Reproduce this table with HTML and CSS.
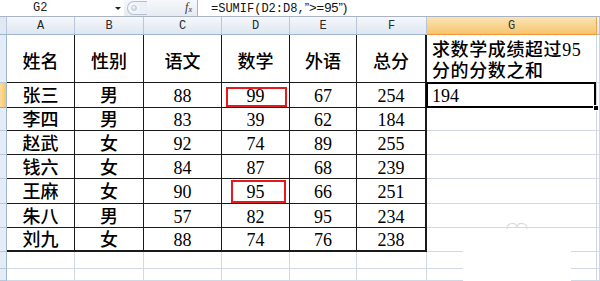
FILE: index.html
```html
<!DOCTYPE html>
<html>
<head>
<meta charset="utf-8">
<link rel="stylesheet" href="styles.css">
</head>
<body>
<div class="bar">
  <div class="namebox">G2</div>
  <div class="dd"><svg width="8" height="5" viewBox="0 0 8 5"><path d="M1 1h6l-3 3z" fill="#222"/></svg></div>
  <div class="tools">
    <span class="knob"><span class="dot"></span></span>
    <span class="fx"><i>f</i><sub>x</sub></span>
  </div>
  <div class="formula"><span class="mono">=SUMIF(D2:D8,</span><span class="sans">”&gt;=95”)</span></div>
</div>
<div class="sheet">
  <div class="h corner"></div>
  <div class="h">A</div><div class="h">B</div><div class="h">C</div><div class="h">D</div><div class="h">E</div><div class="h">F</div><div class="h hs">G</div><div class="h"></div>

  <div class="rh"></div>
  <div class="c d t">姓名</div><div class="c d t">性别</div><div class="c d t">语文</div><div class="c d t">数学</div><div class="c d t">外语</div><div class="c d dr t">总分</div>
  <div class="c g1">求数学成绩超过95<br>分的分数之和</div><div class="c"></div>

  <div class="rh rhs"></div>
  <div class="c d">张三</div><div class="c d">男</div><div class="c d">88</div><div class="c d mark"><span class="red r1"></span>99</div><div class="c d">67</div><div class="c d dr">254</div>
  <div class="c g2">194<span class="sel"></span><span class="handle"></span></div><div class="c"></div>

  <div class="rh"></div>
  <div class="c d">李四</div><div class="c d">男</div><div class="c d">83</div><div class="c d">39</div><div class="c d">62</div><div class="c d dr">184</div>
  <div class="c"></div><div class="c"></div>

  <div class="rh"></div>
  <div class="c d">赵武</div><div class="c d">女</div><div class="c d">92</div><div class="c d">74</div><div class="c d">89</div><div class="c d dr">255</div>
  <div class="c"></div><div class="c"></div>

  <div class="rh"></div>
  <div class="c d">钱六</div><div class="c d">女</div><div class="c d">84</div><div class="c d">87</div><div class="c d">68</div><div class="c d dr">239</div>
  <div class="c"></div><div class="c"></div>

  <div class="rh"></div>
  <div class="c d">王麻</div><div class="c d">女</div><div class="c d">90</div><div class="c d mark"><span class="red r2"></span>95</div><div class="c d">66</div><div class="c d dr">251</div>
  <div class="c"></div><div class="c"></div>

  <div class="rh"></div>
  <div class="c d">朱八</div><div class="c d">男</div><div class="c d">57</div><div class="c d">82</div><div class="c d">95</div><div class="c d dr">234</div>
  <div class="c"></div><div class="c"></div>

  <div class="rh"></div>
  <div class="c d db">刘九</div><div class="c d db">女</div><div class="c d db">88</div><div class="c d db">74</div><div class="c d db">76</div><div class="c d dr db">238</div>
  <div class="c"></div><div class="c"></div>

  <div class="rh"></div>
  <div class="c"></div><div class="c"></div><div class="c"></div><div class="c"></div><div class="c"></div><div class="c"></div><div class="c"></div><div class="c"></div>

  <div class="rh"></div>
  <div class="c"></div><div class="c"></div><div class="c"></div><div class="c"></div><div class="c"></div><div class="c"></div><div class="c"></div><div class="c"></div>

  <div class="patch"></div>
  <svg class="wm" width="22" height="10" viewBox="0 0 22 10"><path d="M1 9C1 2 10 2 11 7C12 2 21 2 21 9" fill="none" stroke="#dcdcdc" stroke-width="1.2"/></svg>
</div>
</body>
</html>
```

FILE: styles.css
```css
* { box-sizing: border-box; }
body {
  margin: 0;
  width: 600px;
  height: 281px;
  overflow: hidden;
  background: #fff;
}
.bar {
  display: flex;
  height: 17px;
  border-bottom: 1px solid #a9b3c1;
  background: #fff;
}
.namebox {
  width: 112px;
  padding-left: 33px;
  font: 12px/16px "Liberation Mono", monospace;
  color: #222;
}
.dd {
  width: 12px;
  display: flex;
  align-items: center;
  justify-content: center;
}
.tools {
  width: 74px;
  display: flex;
  align-items: center;
  justify-content: space-between;
  padding: 0 5px 0 3px;
  background: linear-gradient(#f6f8fb, #e6ebf2);
  border-right: 1px solid #aab4c3;
}
.knob {
  width: 20px;
  height: 14px;
  border: 1px solid #b4c0cf;
  border-right: none;
  border-radius: 8px 0 0 8px;
  background: linear-gradient(90deg, #f7f9fc, #e9eef5);
  display: flex;
  align-items: center;
  padding-left: 3px;
}
.dot {
  width: 6px;
  height: 6px;
  border-radius: 50%;
  background: radial-gradient(circle at 40% 35%, #fff, #b9c2cc);
  border: 1px solid #c3cbd5;
}
.fx {
  font: 12px/16px "Liberation Serif", serif;
  color: #333;
}
.fx sub { font-size: 8px; font-style: italic; vertical-align: -1px; }
.formula {
  flex: 1;
  padding-left: 13px;
  font-size: 12px;
  line-height: 16px;
  color: #111;
  white-space: nowrap;
}
.mono { font-family: "Liberation Mono", monospace; }
.sans { font-family: "Liberation Sans", sans-serif; font-size: 13px; }

.sheet {
  position: relative;
  display: grid;
  grid-template-columns: 7px 68px 69px 78px 68px 67px 70px 170px 3px;
  grid-template-rows: 18px 48px 25px 23px 24px 24px 25px 24px 24px 17px 12px;
}
.h {
  background: linear-gradient(#f5f8fc, #dfe6f0);
  border-right: 1px solid #b8c6d8;
  border-bottom: 1px solid #9eb6ce;
  font: 12px/1 "Liberation Mono", monospace;
  color: #2b2b2b;
  display: flex;
  justify-content: center;
  align-items: flex-end;
  padding-bottom: 2px;
}
.corner { background: #e0e8f3; }
.hs {
  background: linear-gradient(#fbe4b6, #f6c56c);
  border-bottom: 1px solid #f29436;
  border-right: 1px solid #f2a44a;
  color: #333;
}
.rh {
  background: #e4ecf7;
  border-right: 1px solid #9eb6ce;
  border-bottom: 1px solid #b8c9dd;
}
.rhs {
  background: linear-gradient(90deg, #fbdca0, #f7c463);
  border-bottom: 1px solid #f29436;
}
.c {
  border-right: 1px solid #d0d7e5;
  border-bottom: 1px solid #d0d7e5;
  display: flex;
  align-items: center;
  justify-content: center;
  padding-top: 2px;
  font: 500 18px/20px "Liberation Serif", "Noto Sans CJK SC", serif;
  color: #000;
}
.d {
  border-right-color: #1a1a1a;
  border-bottom-color: #1a1a1a;
}
.t { padding-top: 6px; }
.dr { border-right-width: 2px; }
.db { border-bottom-width: 2px; }
.g1 {
  justify-content: flex-start;
  align-items: flex-end;
  padding: 0 0 1px 5px;
  line-height: 21px;
  letter-spacing: 0.6px;
  border-bottom: none;
}
.g2 {
  position: relative;
  justify-content: flex-start;
  padding-left: 5px;
}
.sel {
  position: absolute;
  left: -1px;
  top: -1px;
  right: 0;
  bottom: -1px;
  border: 2px solid #000;
}
.handle {
  position: absolute;
  right: -3px;
  bottom: -4px;
  width: 6px;
  height: 6px;
  background: #000;
  border: 1px solid #fff;
}
.mark { position: relative; }
.red {
  position: absolute;
  border: 2px solid #e8191b;
}
.r1 { left: 4px; top: 4px; right: 2px; bottom: 0; }
.r2 { left: 9px; top: 1px; right: 3px; bottom: 0; }
.patch {
  position: absolute;
  left: 463px;
  top: 211px;
  width: 108px;
  height: 60px;
  background: #fff;
}
.wm {
  position: absolute;
  left: 506px;
  top: 203px;
}
```
